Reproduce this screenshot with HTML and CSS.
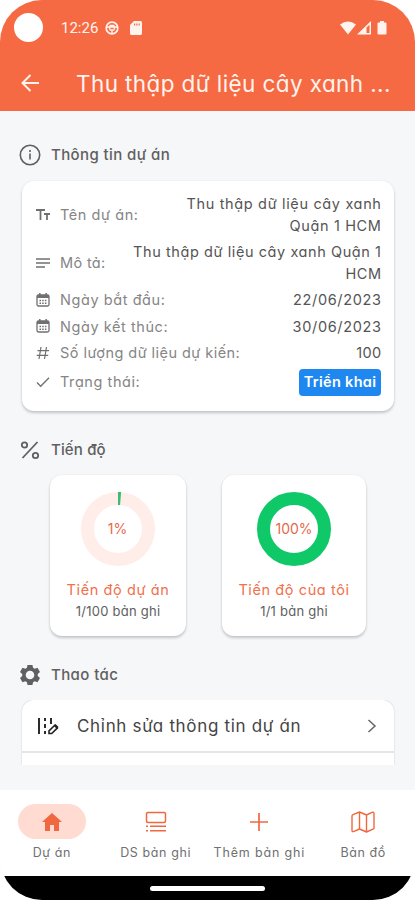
FILE: index.html
```html
<!DOCTYPE html>
<html lang="vi">
<head>
<meta charset="utf-8">
<meta name="viewport" content="width=device-width, initial-scale=1">
<title>Thu thập dữ liệu cây xanh</title>
<link rel="stylesheet" href="styles.css">
</head>
<body>
<div class="phone">
  <header class="header">
    <div class="status">
      <span class="camera"></span>
      <span class="time">12:26</span>
      <svg class="globe" width="14" height="14" viewBox="0 0 14 14" fill="none" stroke="currentColor"><circle cx="7" cy="7" r="5.8" stroke-width="1.7"/><path d="M1 6h12M4 6.2L5.3 9h3.5L10 6.2M7 9v4M4.5 4.5h5" stroke-width="1.4"/></svg>
      <svg class="sd" width="12" height="14" viewBox="0 0 12 14" fill="currentColor"><path fill-rule="evenodd" d="M4 0h6.5Q12 0 12 1.500V12.500Q12 14 10.500 14H1.500Q0 14 0 12.500V4zM4 2.500v2h1.200v-2zm2.300 0v2h1.200v-2zm2.300 0v2h1.200v-2z"/></svg>
      <svg class="signals" width="48" height="14" viewBox="0 0 48 14" fill="currentColor"><path d="M0 3.500Q8-2.500 16 3.500L8 13.500z"/><path fill-rule="evenodd" d="M17 13.500L31 0v13.500zM26.500 6.500v5.500h3V3.800z"/><path d="M40 0h4v1.500h1.500q1 0 1 1v10q0 1-1 1h-7q-1 0-1-1v-10q0-1 1-1H40z"/></svg>
    </div>
    <div class="appbar">
      <svg width="18" height="18" viewBox="0 0 18 18" fill="none" stroke="currentColor" stroke-width="2"><path d="M18 9H1.500M9.500 1L1.500 9l8 8"/></svg>
      <h1>Thu thập dữ liệu cây xanh ...</h1>
    </div>
  </header>
  <main class="content">
    <h2 class="section"><svg width="22" height="22" viewBox="0 0 22 22" fill="none" stroke="currentColor" stroke-width="1.600"><circle cx="11" cy="11" r="9.700"/><path d="M11 9.500v6M11 6v2"/></svg><span>Thông tin dự án</span></h2>
    <section class="card info">
      <div class="row"><svg viewBox="0 0 14 14" fill="none" stroke="currentColor" stroke-width="1.800"><path d="M0 2h9M4.500 2v10M8 6h6M11 6v6"/></svg><span class="label l1">Tên dự án:</span><span class="value v1">Thu thập dữ liệu cây xanh<br>Quận 1 HCM</span></div>
      <div class="row"><svg viewBox="0 0 14 14" fill="none" stroke="currentColor" stroke-width="1.300"><path d="M0 3h14M0 7h14M0 11h9"/></svg><span class="label l2">Mô tả:</span><span class="value v2">Thu thập dữ liệu cây xanh Quận 1<br>HCM</span></div>
      <div class="row"><svg viewBox="0 0 14 14" fill="none" stroke="currentColor"><rect x="1" y="2" width="12" height="11" rx="1.500" stroke-width="1.300"/><path d="M1 3.500h12" stroke-width="3"/><path d="M3.800 0v3M10.200 0v3" stroke-width="1.500"/><path d="M3.500 7.500h7M3.500 10.300h7" stroke-width="1.500" stroke-dasharray="1.500 1.200"/></svg><span class="label l3">Ngày bắt đầu:</span><span class="value v3">22/06/2023</span></div>
      <div class="row"><svg viewBox="0 0 14 14" fill="none" stroke="currentColor"><rect x="1" y="2" width="12" height="11" rx="1.500" stroke-width="1.300"/><path d="M1 3.500h12" stroke-width="3"/><path d="M3.800 0v3M10.200 0v3" stroke-width="1.500"/><path d="M3.500 7.500h7M3.500 10.300h7" stroke-width="1.500" stroke-dasharray="1.500 1.200"/></svg><span class="label l4">Ngày kết thúc:</span><span class="value v3">30/06/2023</span></div>
      <div class="row"><svg viewBox="0 0 14 14" fill="none" stroke="currentColor" stroke-width="1.200"><path d="M5 1L3 13M10.500 1l-2 12M1.500 4.700h11.500M.7 9.300h11.500"/></svg><span class="label l5">Số lượng dữ liệu dự kiến:</span><span class="value v5">100</span></div>
      <div class="row last"><svg viewBox="0 0 14 14" fill="none" stroke="currentColor" stroke-width="1.300"><path d="M1 7.500L4.700 11.300 13 2.800"/></svg><span class="label l6">Trạng thái:</span><span class="badge">Triển khai</span></div>
    </section>
    <h2 class="section progress-title"><svg width="22" height="22" viewBox="0 0 22 22" fill="none" stroke="currentColor" stroke-width="1.800"><path d="M18.500 3L3.500 19"/><circle cx="5.500" cy="6" r="2.700"/><circle cx="16.500" cy="16.500" r="2.700"/></svg><span>Tiến độ</span></h2>
    <section class="progress">
      <div class="card stat">
        <svg class="ring" viewBox="0 0 74 74" fill="none" stroke-width="13"><circle cx="37" cy="37" r="30.500" stroke="#ffede9"/><path d="M37 6.500a30.500 30.500 0 0 1 2.600.1" stroke="#38bd72"/><text x="36.500" y="42" class="pct">1%</text></svg>
        <strong class="s1">Tiến độ dự án</strong><small class="n1">1/100 bản ghi</small>
      </div>
      <div class="card stat mine">
        <svg class="ring" viewBox="0 0 74 74" fill="none" stroke-width="13"><circle cx="37" cy="37" r="30.500" stroke="#0fc968"/><text x="37" y="42" class="pct">100%</text></svg>
        <strong class="s2">Tiến độ của tôi</strong><small class="n2">1/1 bản ghi</small>
      </div>
    </section>
    <h2 class="section action-title"><svg width="22" height="22" viewBox="0 0 24 24" fill="currentColor"><path fill-rule="evenodd" d="M9.300 1h5.400l.6 3.100 1.900 1.100 3-1.100 2.700 4.700-2.400 2.100v2.200l2.400 2.100-2.700 4.700-3-1.100-1.900 1.100-.6 3.100H9.300l-.6-3.100-1.900-1.100-3 1.100-2.700-4.700 2.400-2.100v-2.200L1.100 8.800l2.700-4.700 3 1.100 1.900-1.100zM12 7.300a4.700 4.700 0 1 0 0 9.400 4.700 4.700 0 0 0 0-9.400z"/></svg><span>Thao tác</span></h2>
    <section class="actions">
      <div class="action">
        <svg width="22" height="20" viewBox="0 0 22 20" fill="none" stroke="currentColor" stroke-width="1.900"><path d="M2 2v16M8 2v3M8 8v4M8 15v3M14 2v6" /><path d="M12 17.500v-2.700l5.500-5.300 2.700 2.700-5.500 5.300z" stroke-width="1.600"/><path d="M17 9l3.500 3.500 1-1.500-3-3z" fill="currentColor" stroke="none"/></svg>
        <span>Chỉnh sửa thông tin dự án</span>
        <svg class="chev" width="10" height="14" viewBox="0 0 10 14" fill="none" stroke="currentColor" stroke-width="1.500"><path d="M1.500 1L8 7l-6.500 6"/></svg>
      </div>
      <div class="next"></div>
    </section>
  </main>
  <nav class="nav">
    <div class="tab t1"><span class="pill"><svg width="20" height="18" viewBox="0 0 20 18" fill="currentColor"><path d="M10 0l10 9h-3v9h-5v-6H8v6H3V9H0z"/></svg></span><span class="name">Dự án</span></div>
    <div class="tab t2"><span class="icon"><svg width="22" height="22" viewBox="0 0 22 22" fill="none" stroke="currentColor" stroke-width="1.500"><rect x="1.500" y="1.500" width="19" height="10" rx="1.500"/><path d="M1 15.200h2M5 15.200h16M1 19.800h2M5 19.800h16"/></svg></span><span class="name">DS bản ghi</span></div>
    <div class="tab t3"><span class="icon"><svg width="18" height="18" viewBox="0 0 18 18" fill="none" stroke="currentColor" stroke-width="1.700"><path d="M9 0v18M0 9h18"/></svg></span><span class="name">Thêm bản ghi</span></div>
    <div class="tab t4"><span class="icon"><svg width="24" height="22" viewBox="0 0 24 22" fill="none" stroke="currentColor" stroke-width="1.400" stroke-linejoin="round"><path d="M1 5Q1 4 2 3.600L8.500 1l7 3 5.500-2.600q2-.7 2 1V17q0 .8-1 1.200L15.500 21l-7-3L3 20.400q-2 .7-2-1zM8.500 1v17M15.500 4v17"/></svg></span><span class="name">Bản đồ</span></div>
  </nav>
  <footer class="system"><span></span></footer>
</div>
</body>
</html>
```
FILE: styles.css
```css
* { box-sizing: border-box; }
body { margin: 0; background: #fff; font-family: Inter, "Noto Sans", sans-serif; font-feature-settings: "cv11"; }
h1, h2 { margin: 0; font-weight: 400; }
svg { flex: none; }
.phone { width: 415px; height: 900px; border-radius: 42px; overflow: hidden; background: #f6f7f9; display: flex; flex-direction: column; }
.header { height: 111px; background: #f66a43; color: #fff3ee; flex: none; }
.status { height: 55px; display: flex; align-items: center; padding: 0 27px 0 14px; }
.camera { width: 29px; height: 29px; border-radius: 50%; background: #fff; margin-right: 18px; }
.time { font: 15px Roboto, sans-serif; width: 44px; }
.sd { margin-left: 11px; }
.signals { margin-left: auto; }
.appbar { height: 56px; display: flex; align-items: center; padding-left: 21px; }
.appbar h1 { margin-left: 37px; font-size: 22.500px; letter-spacing: .4px; white-space: nowrap; }
.content { height: 679px; padding: 29px 21px 0 22px; flex: none; }
.section { height: 29px; margin-left: -3px; display: flex; align-items: center; gap: 10px; color: #606060; font-size: 15px; font-weight: 500; letter-spacing: .4px; white-space: nowrap; }
.card { background: #fff; border-radius: 12px; box-shadow: 0 2px 3px #0003, 0 0 2px #0001; }
.info { height: 230px; margin-top: 12px; padding: 12px 13px 0 14px; display: flex; flex-direction: column; gap: 5px; font-size: 14.500px; line-height: 21.500px; }
.row { display: flex; align-items: center; color: #858585; white-space: nowrap; }
.row svg { width: 14px; height: 14px; color: #707070; margin-right: 10px; }
.label { letter-spacing: .57px; }
.l2 { letter-spacing: .35px; }
.l5 { letter-spacing: .45px; }
.value { margin-left: auto; margin-right: -.6px; text-align: right; color: #555; letter-spacing: .65px; }
.v2 { letter-spacing: .58px; }
.v5 { letter-spacing: .4px; }
.badge { margin-left: auto; height: 27px; width: 82px; line-height: 26px; border-radius: 4px; background: #1e88f0; color: #fff; text-align: center; font-weight: 600; letter-spacing: .3px; }
.progress-title { margin-top: 24px; letter-spacing: .15px; }
.progress { display: flex; gap: 36px; margin: 11px 0 0 28px; }
.stat { width: 136px; height: 161px; padding-top: 17px; display: flex; flex-direction: column; align-items: center; white-space: nowrap; }
.mine { width: 144px; }
.ring { width: 74px; height: 74px; }
.pct { fill: #e5694c; stroke: none; font-size: 14px; text-anchor: middle; }
.stat strong { margin-top: 13px; line-height: 22px; font-size: 14.500px; font-weight: 400; letter-spacing: .6px; color: #f2704d; }
.stat small { line-height: 20px; font-size: 13px; letter-spacing: .25px; color: #606060; }
.action-title { margin-top: 24px; }
.actions { height: 65px; margin-top: 11px; border-radius: 12px 12px 0 0; background: #fff; box-shadow: 0 0 2px #0003; clip-path: inset(0 -3px 0); }
.action { height: 53px; border-bottom: 2px solid #e6e6e6; display: flex; align-items: center; padding: 0 17px 0 15px; color: #222; font-size: 17px; letter-spacing: .68px; white-space: nowrap; }
.action span { margin-left: 18px; color: #444; }
.chev { margin-left: auto; color: #666; }
.nav { height: 86px; background: #fff; display: flex; flex: none; padding-top: 14px; }
.tab { width: 103.750px; display: flex; flex-direction: column; align-items: center; color: #f0683f; white-space: nowrap; }
.pill, .icon { width: 68px; height: 35px; display: flex; align-items: center; justify-content: center; }
.pill { border-radius: 18px; background: #ffdbd2; }
.name { margin-top: 5px; line-height: 18px; font-size: 12.500px; letter-spacing: .6px; color: #707070; }
.t3 .name { letter-spacing: .85px; }
.system { height: 24px; background: #000; display: flex; justify-content: center; align-items: center; }
.system span { width: 115px; height: 5px; border-radius: 3px; background: #fff; }
```
